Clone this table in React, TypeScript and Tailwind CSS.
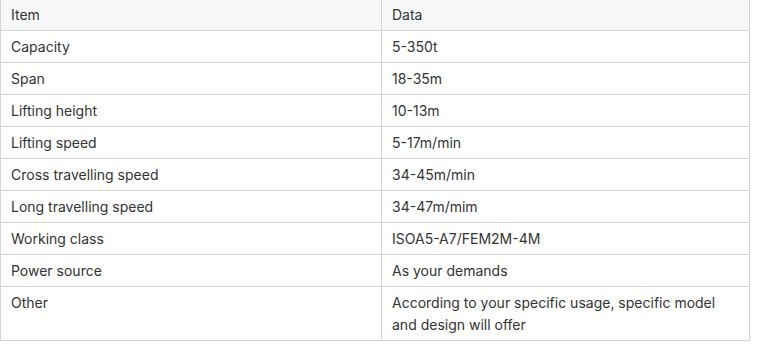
import React from "react";

const rows: [string, React.ReactNode][] = [
  ["Capacity", "5-350t"],
  ["Span", "18-35m"],
  ["Lifting height", "10-13m"],
  ["Lifting speed", "5-17m/min"],
  ["Cross travelling speed", "34-45m/min"],
  ["Long travelling speed", "34-47m/mim"],
  ["Working class", "ISOA5-A7/FEM2M-4M"],
  ["Power source", "As your demands"],
  [
    "Other",
    <>
      According to your specific usage, specific model
      <br />
      and design will offer
    </>,
  ],
];

export default function App() {
  return (
    <div className="w-[763px] h-[345px] bg-white overflow-hidden" style={{ fontFamily: "Inter, 'Noto Sans', sans-serif" }}>
      <table className="border-collapse w-[750px] table-fixed text-[14px] leading-[22px] text-[#333333]">
        <colgroup>
          <col className="w-[381px]" />
          <col />
        </colgroup>
        <thead>
          <tr className="bg-[#f6f7f9]">
            <th className="font-normal text-left border border-t-0 border-[#d4d4d4] pl-[10px] pt-[4px] pb-[4px] align-top">Item</th>
            <th className="font-normal text-left border border-t-0 border-[#d4d4d4] pl-[10px] pt-[4px] pb-[4px] align-top">Data</th>
          </tr>
        </thead>
        <tbody>
          {rows.map(([k, v], i) => (
            <tr key={i}>
              <td className="border border-[#d4d4d4] pl-[10px] pt-[5px] pb-[4px] align-top">{k}</td>
              <td className="border border-[#d4d4d4] pl-[10px] pt-[5px] pb-[4px] align-top">{v}</td>
            </tr>
          ))}
        </tbody>
      </table>
    </div>
  );
}
